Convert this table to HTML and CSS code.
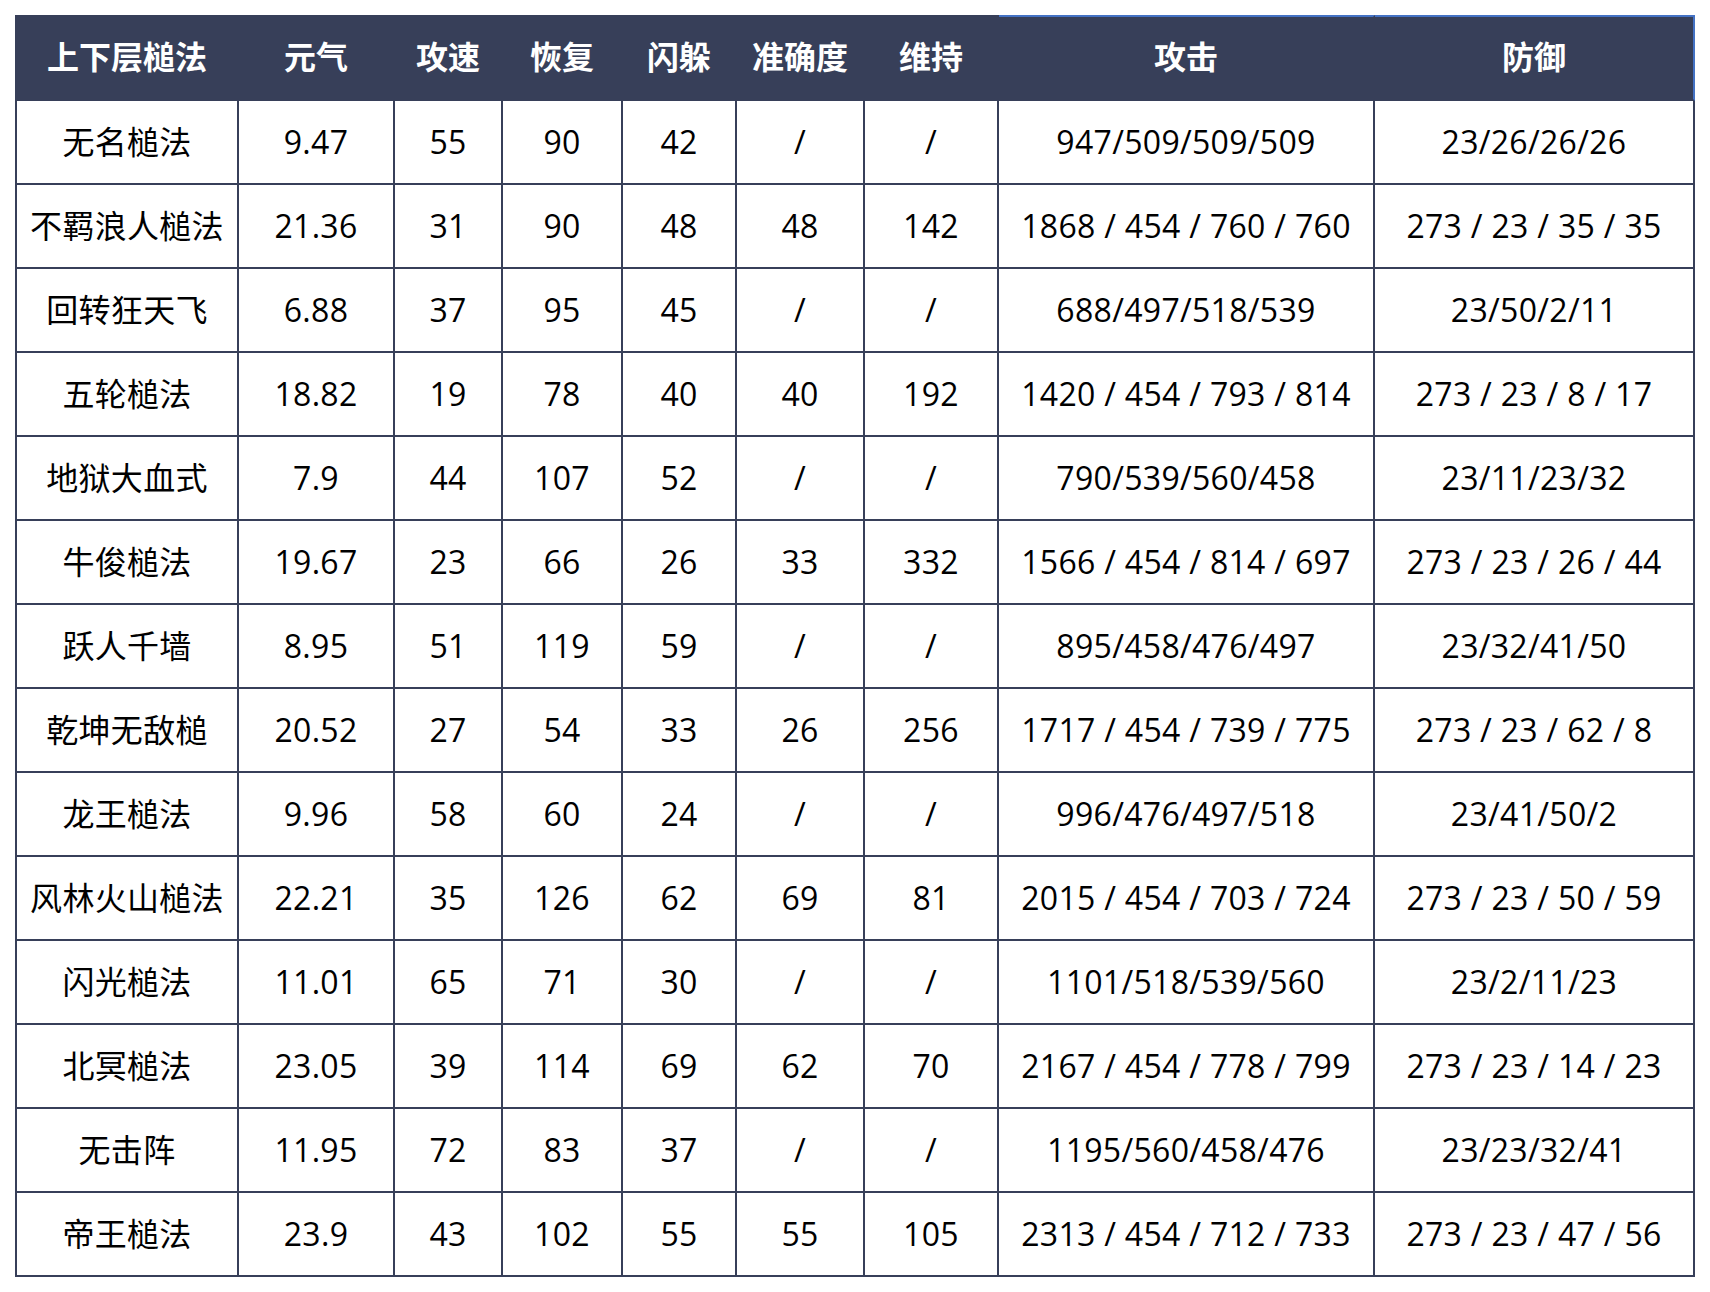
FILE: index.html
```html
<!DOCTYPE html>
<html lang="zh-CN">
<head>
<meta charset="utf-8">
<title>上下层槌法</title>
<link rel="stylesheet" href="styles.css">
</head>
<body>
<div class="page">
<table class="stats">
<colgroup>
<col class="c-name"><col class="c-yq"><col class="c-gs"><col class="c-hf"><col class="c-sd"><col class="c-zq"><col class="c-wc"><col class="c-atk"><col class="c-def">
</colgroup>
<thead>
<tr>
<th>上下层槌法</th><th>元气</th><th>攻速</th><th>恢复</th><th>闪躲</th><th>准确度</th><th>维持</th><th class="hl">攻击</th><th class="hl hl-end">防御</th>
</tr>
</thead>
<tbody>
<tr><td>无名槌法</td><td>9.47</td><td>55</td><td>90</td><td>42</td><td>/</td><td>/</td><td>947/509/509/509</td><td>23/26/26/26</td></tr>
<tr><td>不羁浪人槌法</td><td>21.36</td><td>31</td><td>90</td><td>48</td><td>48</td><td>142</td><td>1868 / 454 / 760 / 760</td><td>273 / 23 / 35 / 35</td></tr>
<tr><td>回转狂天飞</td><td>6.88</td><td>37</td><td>95</td><td>45</td><td>/</td><td>/</td><td>688/497/518/539</td><td>23/50/2/11</td></tr>
<tr><td>五轮槌法</td><td>18.82</td><td>19</td><td>78</td><td>40</td><td>40</td><td>192</td><td>1420 / 454 / 793 / 814</td><td>273 / 23 / 8 / 17</td></tr>
<tr><td>地狱大血式</td><td>7.9</td><td>44</td><td>107</td><td>52</td><td>/</td><td>/</td><td>790/539/560/458</td><td>23/11/23/32</td></tr>
<tr><td>牛俊槌法</td><td>19.67</td><td>23</td><td>66</td><td>26</td><td>33</td><td>332</td><td>1566 / 454 / 814 / 697</td><td>273 / 23 / 26 / 44</td></tr>
<tr><td>跃人千墙</td><td>8.95</td><td>51</td><td>119</td><td>59</td><td>/</td><td>/</td><td>895/458/476/497</td><td>23/32/41/50</td></tr>
<tr><td>乾坤无敌槌</td><td>20.52</td><td>27</td><td>54</td><td>33</td><td>26</td><td>256</td><td>1717 / 454 / 739 / 775</td><td>273 / 23 / 62 / 8</td></tr>
<tr><td>龙王槌法</td><td>9.96</td><td>58</td><td>60</td><td>24</td><td>/</td><td>/</td><td>996/476/497/518</td><td>23/41/50/2</td></tr>
<tr><td>风林火山槌法</td><td>22.21</td><td>35</td><td>126</td><td>62</td><td>69</td><td>81</td><td>2015 / 454 / 703 / 724</td><td>273 / 23 / 50 / 59</td></tr>
<tr><td>闪光槌法</td><td>11.01</td><td>65</td><td>71</td><td>30</td><td>/</td><td>/</td><td>1101/518/539/560</td><td>23/2/11/23</td></tr>
<tr><td>北冥槌法</td><td>23.05</td><td>39</td><td>114</td><td>69</td><td>62</td><td>70</td><td>2167 / 454 / 778 / 799</td><td>273 / 23 / 14 / 23</td></tr>
<tr><td>无击阵</td><td>11.95</td><td>72</td><td>83</td><td>37</td><td>/</td><td>/</td><td>1195/560/458/476</td><td>23/23/32/41</td></tr>
<tr><td>帝王槌法</td><td>23.9</td><td>43</td><td>102</td><td>55</td><td>55</td><td>105</td><td>2313 / 454 / 712 / 733</td><td>273 / 23 / 47 / 56</td></tr>
</tbody>
</table>
</div>
</body>
</html>
```
FILE: styles.css
```css
html, body {
  margin: 0;
  padding: 0;
  background: #ffffff;
}

.page {
  padding: 15px 0 0 15px;
}

.stats {
  border-collapse: separate;
  border-spacing: 0;
  table-layout: fixed;
  width: 1680px;
  border-left: 2px solid #373f59;
  font-family: "Open Sans", "Noto Sans CJK SC", sans-serif;
  font-size: 32px;
  letter-spacing: 0.3px;
  color: #000000;
}

.c-name { width: 222px; }
.c-yq { width: 156px; }
.c-gs { width: 108px; }
.c-hf { width: 120px; }
.c-sd { width: 114px; }
.c-zq { width: 128px; }
.c-wc { width: 134px; }
.c-atk { width: 376px; }
.c-def { width: 320px; }

.stats th,
.stats td {
  box-sizing: border-box;
  padding: 0;
  text-align: center;
  vertical-align: middle;
  white-space: nowrap;
  border-right: 2px solid #373f59;
  border-bottom: 2px solid #373f59;
  height: 84px;
  line-height: 1;
}

.stats th {
  height: 86px;
  padding-bottom: 6px;
  border-top: 2px solid #373f59;
  background: #373f59;
  color: #ffffff;
  font-family: "Noto Sans CJK SC", sans-serif;
  font-weight: 700;
  letter-spacing: 0;
}

.stats th.hl {
  border-top-color: #4472c4;
}

.stats th.hl-end {
  border-right-color: #4472c4;
}
```
